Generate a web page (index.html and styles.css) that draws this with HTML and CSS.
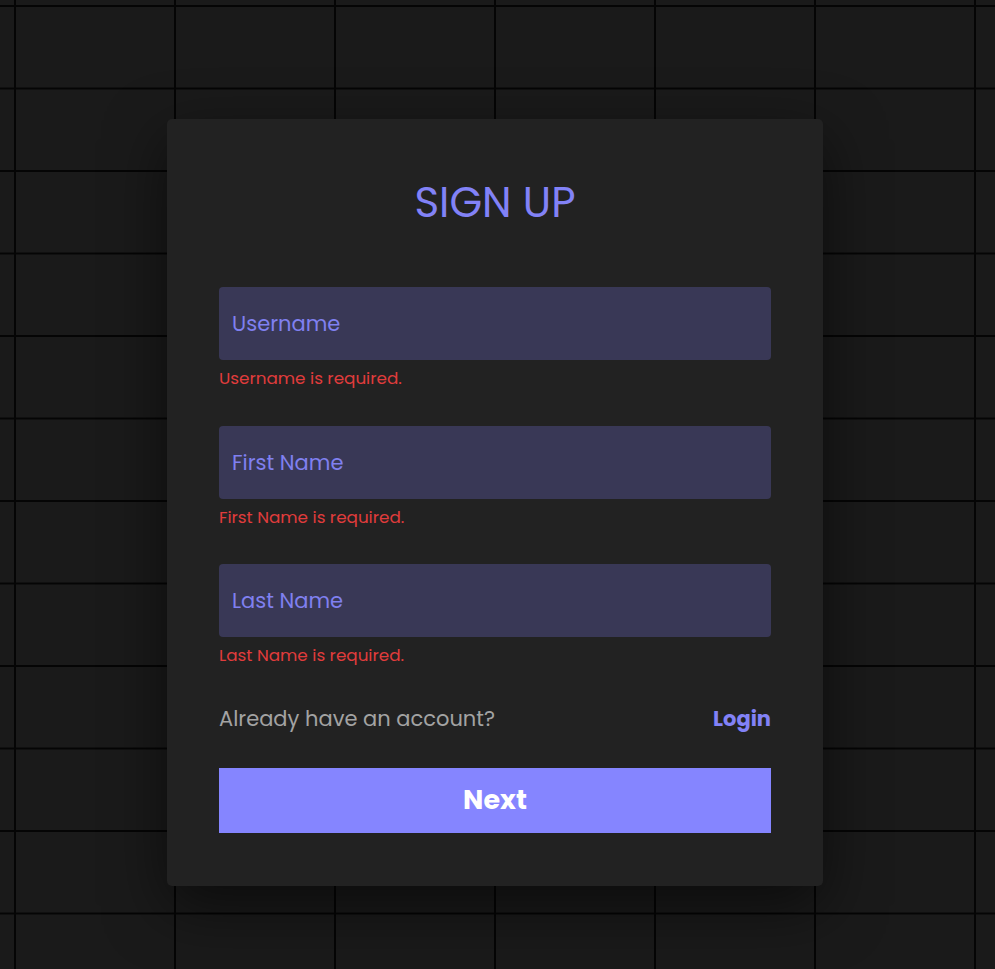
FILE: index.html
```html
<!DOCTYPE html>
<html lang="en">
  <head>
    <meta charset="UTF-8" />
    <meta name="viewport" content="width=device-width, initial-scale=1.0" />
    <title>Sign Up</title>
    <link rel="stylesheet" href="styles.css">
  </head>
  <body>
    <div class="signup-card">
      <h1>SIGN UP</h1>

      <form class="signup-form" onsubmit="return false">
        <div class="field">
          <input type="text" name="username" placeholder="Username" aria-label="Username" />
          <p class="error">Username is required.</p>
        </div>
        <div class="field">
          <input type="text" name="first_name" placeholder="First Name" aria-label="First Name" />
          <p class="error">First Name is required.</p>
        </div>
        <div class="field">
          <input type="text" name="last_name" placeholder="Last Name" aria-label="Last Name" />
          <p class="error">Last Name is required.</p>
        </div>

        <div class="account-row">
          <span>Already have an account?</span>
          <a href="#">Login</a>
        </div>

        <button type="submit" class="next-btn">Next</button>
      </form>
    </div>
  </body>
</html>
```

FILE: styles.css
```css
* {
  margin: 0;
  padding: 0;
  box-sizing: border-box;
}
body {
  font-family: "Poppins", "Inter", "Open Sans", sans-serif;
  min-height: 100vh;
  background-color: #1a1a1a;
  background-image:
    linear-gradient(to bottom, #050505 2px, transparent 2px),
    linear-gradient(to right, #050505 2px, transparent 2px);
  background-size: 160px 82.5px;
  background-position: 14px 5px;
  display: flex;
  justify-content: center;
  align-items: flex-start;
  padding: 119px 5px 0 0;
}
.signup-card {
  width: 656px;
  background: #222222;
  border-radius: 5px;
  padding: 54px 52px 53px;
  box-shadow: 0 20px 60px rgba(0, 0, 0, 0.55);
}
h1 {
  font-size: 42px;
  font-weight: 400;
  line-height: 60px;
  text-align: center;
  color: #8282f7;
  margin-bottom: 54px;
}
.field {
  margin-bottom: 36.5px;
}
.field input {
  width: 100%;
  height: 73px;
  padding: 0 13px;
  border: none;
  border-radius: 4px;
  background: #393856;
  color: #d8d8ff;
  font-family: inherit;
  font-size: 21px;
  outline: none;
}
.field input::placeholder {
  color: #8080f0;
}
.error {
  margin-top: 7px;
  font-size: 16.8px;
  line-height: 22px;
  color: #e03c3c;
}
.account-row {
  display: flex;
  justify-content: space-between;
  align-items: center;
  height: 30px;
  margin-top: 37.5px;
  margin-bottom: 34px;
  font-size: 21px;
  color: #a3a3a3;
}
.account-row a {
  color: #8282f7;
  font-weight: 700;
  text-decoration: none;
}
.next-btn {
  width: 100%;
  height: 65px;
  border: none;
  background: #8585ff;
  color: #fff;
  font-family: inherit;
  font-size: 27px;
  font-weight: 700;
  cursor: pointer;
}
```
